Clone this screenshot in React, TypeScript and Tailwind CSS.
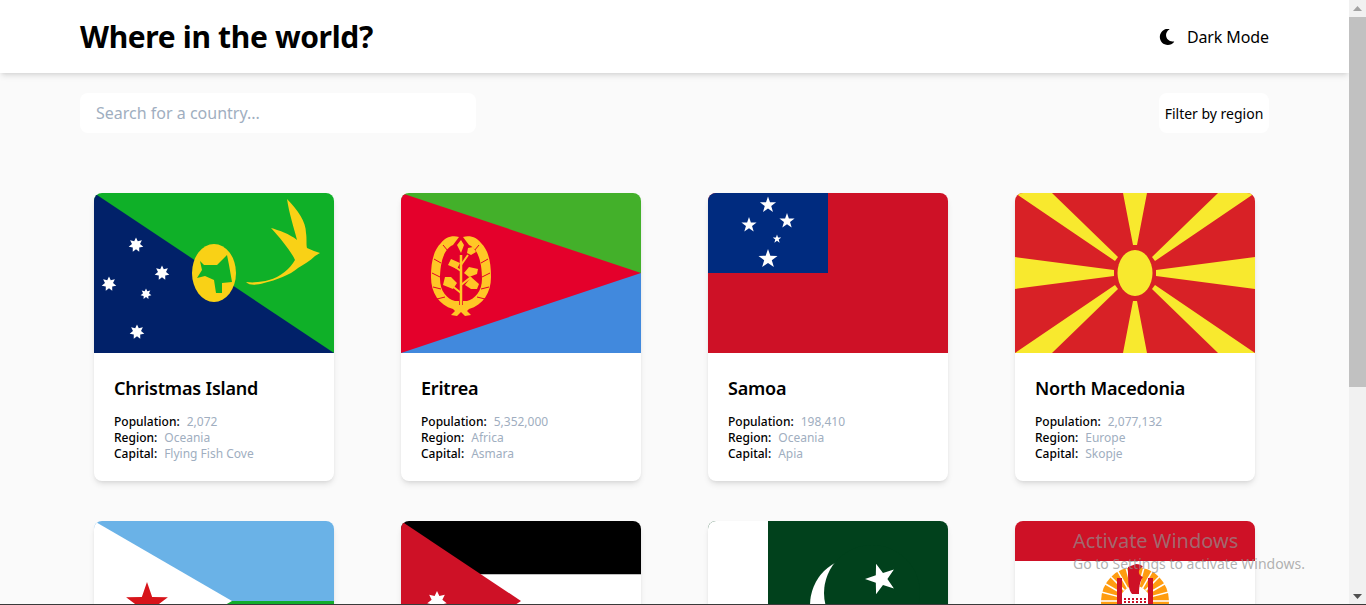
const star = (cx: number, cy: number, r: number, n = 5, inner = 0.4, rot = 0) => {
  const pts: string[] = [];
  for (let i = 0; i < n * 2; i++) {
    const a = (Math.PI * i) / n - Math.PI / 2 + (rot * Math.PI) / 180;
    const rr = i % 2 ? r * inner : r;
    pts.push(`${(cx + rr * Math.cos(a)).toFixed(2)},${(cy + rr * Math.sin(a)).toFixed(2)}`);
  }
  return pts.join(" ");
};

const svgClass = "block h-[160px] w-[240px]";

const ChristmasFlag = () => (
  <svg viewBox="0 0 240 160" className={svgClass}>
    <rect width="240" height="160" fill="#0fb028" />
    <polygon points="0,0 240,160 0,160" fill="#012169" />
    {[
      [42, 52, 7.5],
      [68, 80, 7.5],
      [15, 91, 7.5],
      [52, 101, 5.5],
      [43, 139, 7.5],
    ].map(([x, y, r]) => (
      <polygon key={`${x}-${y}`} points={star(x, y, r, 7, 0.55)} fill="#fff" />
    ))}
    <ellipse cx="120" cy="80" rx="22" ry="29" fill="#f9d116" />
    <path
      d="M106 68 L110 72 L123 72 L133 62 L135 72 L138 89 L128 90 L128 100 L122 100 L120 87 L111 83 L103 85 L108 77 Z"
      fill="#0fb028"
    />
    <path
      d="M193 6 C204 17 212 29 212 40 C213 46 212 51 213 55 L220 58 L226 60 L221 63 C216 68 210 71 204 75 C196 82 182 87 170 90 C163 92 156 93 152 89 C160 90 168 89 175 87 C186 84 196 76 201 67 C197 58 186 45 177 35 C184 37 196 41 203 47 C200 35 195 20 193 6 Z"
      fill="#f9d116"
    />
  </svg>
);

const leaves = [
  [-1, 48, -1],
  [1, 60, 1],
  [-1, 68, 1],
  [1, 78, 1],
  [-1, 86, 1],
  [1, 96, 1],
  [-1, 96, 1],
];

const EritreaFlag = () => (
  <svg viewBox="0 0 240 160" className={svgClass}>
    <rect width="240" height="80" fill="#43b02a" />
    <rect y="80" width="240" height="80" fill="#4189dd" />
    <polygon points="0,0 240,80 0,160" fill="#e4002b" />
    <path
      d="M58 44 C50 42 44 45 40 50 C32 58 30 70 30 84 C30 100 38 112 52 116 L54 118 L50 122 L56 123 L60 119 L64 123 L70 122 L66 118 L68 116 C82 112 90 100 90 84 C90 70 88 58 80 50 C76 45 70 42 62 44 L68 52 C78 56 81 72 81 86 C81 98 74 106 66 108 L62 108 L62 112 L58 112 L58 108 L54 108 C46 106 39 98 39 86 C39 72 42 56 52 52 Z"
      fill="#ffc726"
    />
    <g stroke="#e4002b" strokeWidth="1">
      <path d="M33 66 L40 70 M31 80 L39 84 M32 94 L40 96 M36 106 L44 104 M87 66 L80 70 M89 80 L81 84 M88 94 L80 96 M84 106 L76 104 M42 52 L47 58 M78 52 L73 58" />
    </g>
    <path d="M60 115 L60 62" stroke="#ffc726" strokeWidth="2.5" />
    <path d="M60 100 L50 92 M60 92 L70 84 M60 78 L51 72 M60 72 L67 62" stroke="#ffc726" strokeWidth="2" />
    <path d="M60 60 L56 52 L60 47 L63 52 Z M50 66 L47 72 L56 76 L59 70 Z M66 60 L70 62 L75 59 L72 54 L67 55 Z M68 84 L63 80 L68 74 L77 76 L76 81 Z M44 84 L42 92 L52 96 L56 90 L50 84 Z M70 96 L64 92 L70 84 L78 91 L76 96 Z" fill="#ffc726" />
  </svg>
);

const SamoaFlag = () => (
  <svg viewBox="0 0 240 160" className={svgClass}>
    <rect width="240" height="160" fill="#ce1126" />
    <rect width="120" height="80" fill="#002b7f" />
    {[
      [60, 12, 8.5],
      [41, 32, 8],
      [79, 28, 8],
      [69, 46, 4.5],
      [60, 66, 10],
    ].map(([x, y, r]) => (
      <polygon key={`${x}-${y}`} points={star(x, y, r)} fill="#fff" />
    ))}
  </svg>
);

const MacedoniaFlag = () => (
  <svg viewBox="0 0 240 160" className={svgClass}>
    <rect width="240" height="160" fill="#d82126" />
    <path
      d="M108 0 L132 0 L122 52 L118 52 Z M108 160 L132 160 L122 108 L118 108 Z M0 64 L99 77 L99 83 L0 96 Z M240 64 L141 77 L141 83 L240 96 Z M0 0 L37 0 L103 64 L100 68 Z M240 0 L203 0 L137 64 L140 68 Z M0 160 L37 160 L103 96 L100 92 Z M240 160 L203 160 L137 96 L140 92 Z"
      fill="#f8e92e"
    />
    <ellipse cx="120" cy="80" rx="17.5" ry="23" fill="#f8e92e" />
  </svg>
);

const DjiboutiFlag = () => (
  <svg viewBox="0 0 240 160" className={svgClass}>
    <rect width="240" height="80" fill="#6ab2e7" />
    <rect y="80" width="240" height="80" fill="#12ad2b" />
    <polygon points="0,0 138,80 0,160" fill="#fff" />
    <polygon points={star(53, 83, 22)} fill="#d7141a" />
  </svg>
);

const JordanFlag = () => (
  <svg viewBox="0 0 240 160" className={svgClass}>
    <rect width="240" height="53.5" fill="#000" />
    <rect y="53.5" width="240" height="53.5" fill="#fff" />
    <rect y="107" width="240" height="53" fill="#007a3d" />
    <polygon points="0,0 120,80 0,160" fill="#ce1126" />
    <polygon points={star(36, 80, 10, 7, 0.55)} fill="#fff" />
  </svg>
);

const PakistanFlag = () => (
  <svg viewBox="0 0 240 160" className={svgClass}>
    <rect width="240" height="160" fill="#01411c" />
    <rect width="60" height="160" fill="#fff" />
    <circle cx="150" cy="84" r="48" fill="#fff" />
    <circle cx="164" cy="72" r="48" fill="#01411c" />
    <polygon points={star(173, 58, 16, 5, 0.4, -18)} fill="#fff" />
  </svg>
);

const PolynesiaFlag = () => {
  const rays = Array.from({ length: 17 }, (_, i) => -90 - 120 + (i * 240) / 16);
  return (
    <svg viewBox="0 0 240 160" className={svgClass}>
      <rect width="240" height="160" fill="#fff" />
      <rect width="240" height="40" fill="#ce1126" />
      <circle cx="120" cy="80" r="34" fill="#ff9c10" />
      <circle cx="120" cy="80" r="15" fill="#fff" />
      {rays.map((a) => {
        const t = (a * Math.PI) / 180;
        return (
          <line
            key={a}
            x1={120 + 15 * Math.cos(t)}
            y1={80 + 15 * Math.sin(t)}
            x2={120 + 36 * Math.cos(t)}
            y2={80 + 36 * Math.sin(t)}
            stroke="#fff"
            strokeWidth="1.5"
          />
        );
      })}
      <path d="M113 46 L121 43 C124 43 127 44 128 46 C123 47 122 54 128 56 C125 60 124 66 124 73 L117 73 C113 68 113 60 113 46 Z" fill="#ce1126" />
      <rect x="102" y="57" width="5" height="27" fill="#ce1126" />
      <rect x="133" y="57" width="5" height="27" fill="#ce1126" />
      <rect x="99" y="71" width="42" height="3" fill="#ce1126" opacity="0" />
      <path d="M107 73 L133 73 L133 84 L107 84 Z" fill="#fff" />
      <path d="M109 78 L131 78 M109 81 L131 81" stroke="#ce1126" strokeWidth="2" strokeDasharray="2 2" />
    </svg>
  );
};

type Country = {
  name: string;
  population: string;
  region: string;
  capital: string;
  Flag: () => React.ReactElement;
};

const countries: Country[] = [
  { name: "Christmas Island", population: "2,072", region: "Oceania", capital: "Flying Fish Cove", Flag: ChristmasFlag },
  { name: "Eritrea", population: "5,352,000", region: "Africa", capital: "Asmara", Flag: EritreaFlag },
  { name: "Samoa", population: "198,410", region: "Oceania", capital: "Apia", Flag: SamoaFlag },
  { name: "North Macedonia", population: "2,077,132", region: "Europe", capital: "Skopje", Flag: MacedoniaFlag },
  { name: "Djibouti", population: "988,002", region: "Africa", capital: "Djibouti", Flag: DjiboutiFlag },
  { name: "Jordan", population: "10,203,140", region: "Asia", capital: "Amman", Flag: JordanFlag },
  { name: "Pakistan", population: "220,892,331", region: "Asia", capital: "Islamabad", Flag: PakistanFlag },
  { name: "French Polynesia", population: "280,904", region: "Oceania", capital: "Papeetē", Flag: PolynesiaFlag },
];

const Row = ({ label, value }: { label: string; value: string }) => (
  <p className="flex gap-[7px] text-[12px] leading-4">
    <span className="font-medium text-black">{label}:</span>
    <span className="text-[#a0aec0]">{value}</span>
  </p>
);

const Card = ({ c }: { c: Country }) => (
  <article className="h-[288px] w-[240px] overflow-hidden rounded-lg bg-white shadow-md">
    <c.Flag />
    <div className="px-5 pt-[24px]">
      <h2 className="mb-[15px] text-[18px] leading-[22px] font-semibold tracking-[-0.2px] text-black">{c.name}</h2>
      <Row label="Population" value={c.population} />
      <Row label="Region" value={c.region} />
      <Row label="Capital" value={c.capital} />
    </div>
  </article>
);

export default function App() {
  return (
    <div className="relative flex h-[605px] w-full overflow-hidden bg-[#fafafa] font-['Noto_Sans','Open_Sans',sans-serif]">
      <div className="min-w-0 flex-1 overflow-hidden">
        <header className="relative z-10 flex h-[73px] items-center justify-between bg-white px-20 shadow-md">
          <h1 className="text-[30px] leading-9 font-bold tracking-[-0.35px] text-black">Where in the world?</h1>
          <button className="flex items-center gap-3 text-[16px] text-black">
            <svg viewBox="0 0 512 512" className="h-4 w-4" fill="#000">
              <path d="M283 512c79 0 151-36 199-95 7-9-1-22-12-20-128 24-245-74-245-203 0-74 40-143 104-180 10-6 7-21-4-23-14-3-28-4-42-4C141 0 26 115 26 256s115 256 257 256z" />
            </svg>
            <span className="tracking-[-0.1px]">Dark Mode</span>
          </button>
        </header>
        <main className="px-20 pt-5">
          <div className="flex items-center justify-between">
            <div className="flex h-10 w-[396px] items-center rounded-lg bg-white pl-4 text-[16px] text-[#a0aec0]">Search for a country...</div>
            <div className="flex h-10 w-[110px] items-center justify-center rounded-lg bg-white text-[14px] text-black">Filter by region</div>
          </div>
          <div className="mt-[60px] grid grid-cols-[repeat(4,240px)] gap-x-[67px] gap-y-10 px-[14px]">
            {countries.map((c) => (
              <Card key={c.name} c={c} />
            ))}
          </div>
        </main>
      </div>
      <div className="flex w-[17px] shrink-0 flex-col bg-[#f1f1f1]">
        <div className="flex h-[17px] items-center justify-center">
          <svg viewBox="0 0 9 5" className="h-[5px] w-[9px]"><polygon points="4.5,0 9,5 0,5" fill="#a3a3a3" /></svg>
        </div>
        <div className="h-[370px] bg-[#c1c1c1]" />
        <div className="flex-1" />
        <div className="flex h-[17px] items-center justify-center">
          <svg viewBox="0 0 9 5" className="h-[5px] w-[9px]"><polygon points="0,0 9,0 4.5,5" fill="#505050" /></svg>
        </div>
      </div>
      <div className="absolute right-[56px] bottom-[32px] left-[1073px] text-[#8f8f8f]/70">
        <p className="text-[20px] leading-[27px] whitespace-nowrap">Activate Windows</p>
        <p className="text-[14px] leading-[19px] whitespace-nowrap">Go to Settings to activate Windows.</p>
      </div>
      <div className="absolute inset-x-0 bottom-0 h-px bg-[#3a3a3a]" />
    </div>
  );
}
